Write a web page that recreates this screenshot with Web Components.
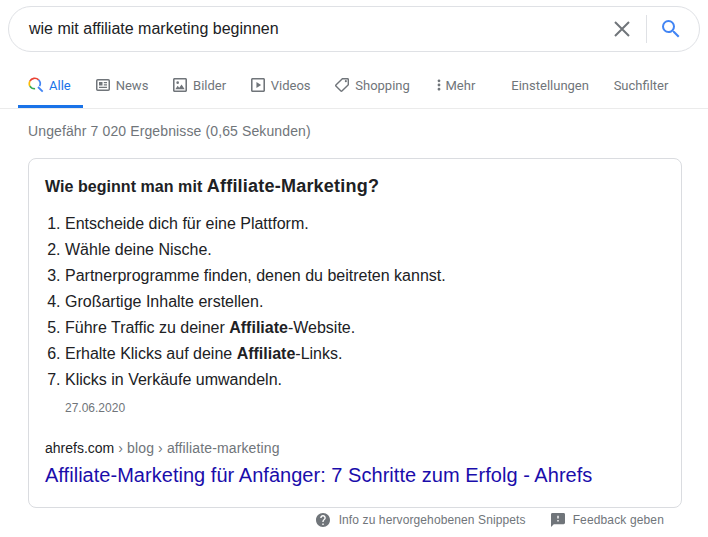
<!DOCTYPE html>
<html lang="de"><head><meta charset="utf-8"><title>Suche</title>
<style>html,body{margin:0;background:#fff;font-family:"Liberation Sans",Arial,sans-serif;overflow:hidden}body{width:708px;height:537px}</style>
</head><body>
<search-page></search-page>
<script>
const icons={
 g:'<svg width="16" height="16" viewBox="0 0 16 16" fill="none" stroke-width="1.7"><path stroke="#4285f4" stroke-width="1.8" d="M10 10l4.700 4.700"/><path stroke="#ea4335" d="M1.900 4.200A5.400 5.400 0 0 1 10.600 2.900"/><path stroke="#fbbc05" d="M1.900 4.200a5.400 5.400 0 0 0 0 4.900"/><path stroke="#34a853" d="M1.900 9.100a5.400 5.400 0 0 0 5.200 2.600"/><path stroke="#4285f4" d="M10.600 2.900a5.400 5.400 0 0 1 1 6.300"/></svg>',
 news:'<svg width="14" height="14" viewBox="0 0 14 14" fill="#70757a"><rect x=".75" y="1.750" width="12.500" height="10.500" rx="1" fill="none" stroke="#70757a" stroke-width="1.500"/><path d="M3 4h3.500v3.500H3zM7.800 4H11v1.300H7.800zM7.800 6.200H11v1.300H7.800zM3 8.700h8V10H3z"/></svg>',
 img:'<svg width="14" height="14" viewBox="3 3 18 18" fill="#70757a"><path d="M19 5v14H5V5h14m0-2H5c-1.100 0-2 .9-2 2v14c0 1.100.9 2 2 2h14c1.100 0 2-.9 2-2V5c0-1.100-.9-2-2-2z"/><circle cx="9" cy="9" r="1.700"/><path d="M14 11.500l-3 4-2-2.500-3 4.500h12z"/></svg>',
 vid:'<svg width="14" height="14" viewBox="3 3 18 18" fill="#70757a"><path d="M19 5v14H5V5h14m0-2H5c-1.100 0-2 .9-2 2v14c0 1.100.9 2 2 2h14c1.100 0 2-.9 2-2V5c0-1.100-.9-2-2-2z"/><path d="M10 8v8l6-4z"/></svg>',
 tag:'<svg width="14" height="14" viewBox="2 2 20 20" fill="#70757a" style="transform:scaleX(-1)"><path d="M21.410 11.410l-8.830-8.830c-.37-.37-.88-.58-1.410-.58H4c-1.100 0-2 .9-2 2v7.170c0 .53.21 1.040.59 1.410l8.830 8.830c.78.78 2.050.78 2.830 0l7.170-7.170c.78-.78.78-2.050-.01-2.830zM12.830 20L4 11.170V4h7.170L20 12.830 12.830 20z"/><circle cx="6.500" cy="6.500" r="1.500"/></svg>',
 dots:'<svg width="8" height="14" viewBox="8 2 8 20" fill="#70757a"><path d="M12 8c1.100 0 2-.9 2-2s-.9-2-2-2-2 .9-2 2 .9 2 2 2zm0 2c-1.100 0-2 .9-2 2s.9 2 2 2 2-.9 2-2-.9-2-2-2zm0 6c-1.100 0-2 .9-2 2s.9 2 2 2 2-.9 2-2-.9-2-2-2z"/></svg>',
 help:'<svg width="14" height="14" viewBox="2 2 20 20" fill="#70757a"><path d="M12 2C6.480 2 2 6.480 2 12s4.480 10 10 10 10-4.480 10-10S17.520 2 12 2zm1 17h-2v-2h2v2zm2.070-7.750l-.9.920C13.450 12.900 13 13.500 13 15h-2v-.5c0-1.100.45-2.100 1.170-2.830l1.240-1.260c.37-.36.59-.86.59-1.410 0-1.100-.9-2-2-2s-2 .9-2 2H8c0-2.210 1.790-4 4-4s4 1.790 4 4c0 .88-.36 1.680-.93 2.250z"/></svg>',
 fb:'<svg width="14" height="14" viewBox="2 2 20 20" fill="#70757a"><path d="M20 2H4c-1.100 0-2 .9-2 2v18l4-4h14c1.100 0 2-.9 2-2V4c0-1.100-.9-2-2-2zm-7 12h-2v-2h2v2zm0-4h-2V6h2v4z"/></svg>'
};
class SearchBox extends HTMLElement{constructor(){super();this.attachShadow({mode:'open'}).innerHTML=`<style>
:host{display:flex;align-items:center;box-sizing:border-box;margin:6px 0 0 8px;width:692px;height:46px;border:1px solid #dfe1e5;border-radius:23px;padding:0 0 0 20px;color:#202124;font-size:16px}
.q{flex:1}.x{width:18px;height:18px;display:block;margin-right:15px}.sep{width:1px;height:28px;background:#dfe1e5}.s{display:block;margin:0 16px 0 12px}
</style><span class="q"><slot></slot></span>
<svg class="x" viewBox="0 0 18 18"><path d="M2 2l14 14M16 2L2 16" stroke="#70757a" stroke-width="2" fill="none"/></svg>
<span class="sep"></span>
<svg class="s" width="24" height="24" viewBox="0 0 24 24"><path fill="#4285f4" d="M15.500 14h-.79l-.28-.27A6.470 6.470 0 0 0 16 9.500 6.500 6.500 0 1 0 9.500 16c1.610 0 3.090-.59 4.230-1.570l.27.28v.79l5 4.990L20.490 19l-4.990-5zm-6 0C7.010 14 5 11.990 5 9.500S7.010 5 9.500 5 14 7.010 14 9.500 11.990 14 9.500 14z"/></svg>`}}
customElements.define('search-box',SearchBox);
class TabItem extends HTMLElement{constructor(){super();const ic=this.getAttribute('icon');this.attachShadow({mode:'open'}).innerHTML=`<style>
:host{display:flex;align-items:center;gap:var(--g,6px);height:100%;box-sizing:border-box;color:#70757a;font:13px Roboto,Arial,sans-serif;padding-bottom:6px;border-bottom:3px solid transparent}
:host([active]){color:#1a73e8;border-bottom-color:#1a73e8;padding-left:10px;padding-right:12px;margin-right:-11.700px;--g:5px}
svg{display:block;flex:none}
</style>${ic?icons[ic]:''}<span><slot></slot></span>`}}
customElements.define('tab-item',TabItem);
class TabBar extends HTMLElement{constructor(){super();this.attachShadow({mode:'open'}).innerHTML=`<style>
:host{display:flex;align-items:stretch;box-sizing:border-box;height:38px;margin-top:19px;padding-left:18px;border-bottom:1px solid #ebebeb;gap:24.700px}
</style><slot></slot>`}}
customElements.define('tab-bar',TabBar);
class SnippetCard extends HTMLElement{constructor(){super();this.attachShadow({mode:'open'}).innerHTML=`<style>
:host{display:block;box-sizing:border-box;margin:16px 0 0 28px;width:654px;height:350px;border:1px solid #dadce0;border-radius:8px;padding:15px 16px 0;color:#202124}
h2{margin:0;font-size:16px;line-height:24px;font-weight:bold;color:#202124;letter-spacing:.05px}
h2 span{font-size:18px;letter-spacing:.22px}
ol{margin:12px 0 0;padding:0 0 0 20px;font-size:16px;line-height:26px}
.date{font-size:12px;color:#70757a;margin:5px 0 0 20px;line-height:20px}
.cite{font-size:14px;line-height:20px;color:#70757a;margin-top:20px;letter-spacing:.13px}.cite b{font-weight:normal;color:#202124;letter-spacing:0}
a{display:block;font-size:20px;line-height:26px;color:#1a0dab;margin-top:4px;text-decoration:none;letter-spacing:.03px}
</style>
<h2>Wie beginnt man mit <span>Affiliate-Marketing?</span></h2>
<ol><li>Entscheide dich für eine Plattform.</li><li>Wähle deine Nische.</li><li>Partnerprogramme finden, denen du beitreten kannst.</li><li>Großartige Inhalte erstellen.</li><li>Führe Traffic zu deiner <b>Affiliate</b>-Website.</li><li>Erhalte Klicks auf deine <b>Affiliate</b>-Links.</li><li>Klicks in Verkäufe umwandeln.</li></ol>
<div class="date">27.06.2020</div>
<div class="cite"><b>ahrefs.com</b> › blog › affiliate-marketing</div>
<a href="#">Affiliate-Marketing für Anfänger: 7 Schritte zum Erfolg - Ahrefs</a>`}}
customElements.define('snippet-card',SnippetCard);
class FootLink extends HTMLElement{constructor(){super();this.attachShadow({mode:'open'}).innerHTML=`<style>
:host{display:flex;align-items:center;gap:var(--g,9px);color:#70757a;font-size:12px;letter-spacing:var(--ls,.14px)}svg{display:block}
</style>${icons[this.getAttribute('icon')]}<span><slot></slot></span>`}}
customElements.define('foot-link',FootLink);
class SearchPage extends HTMLElement{constructor(){super();this.attachShadow({mode:'open'}).innerHTML=`<style>
:host{display:block}
.stats{margin:11px 0 0 28px;font-size:14px;line-height:22px;color:#70757a;letter-spacing:.12px}
.foot{display:flex;justify-content:flex-end;gap:25px;margin:5px 44px 0 0}
</style>
<search-box>wie mit affiliate marketing beginnen</search-box>
<tab-bar>
<tab-item active icon="g">Alle</tab-item>
<tab-item icon="news">News</tab-item>
<tab-item icon="img">Bilder</tab-item>
<tab-item icon="vid">Videos</tab-item>
<tab-item icon="tag">Shopping</tab-item>
<tab-item icon="dots" style="--g:3px">Mehr</tab-item>
<tab-item style="margin-left:11.300px">Einstellungen</tab-item>
<tab-item>Suchfilter</tab-item>
</tab-bar>
<div class="stats">Ungefähr 7 020 Ergebnisse (0,65 Sekunden)</div>
<snippet-card></snippet-card>
<div class="foot"><foot-link icon="help" style="--ls:.11px">Info zu hervorgehobenen Snippets</foot-link><foot-link icon="fb" style="--g:8px">Feedback geben</foot-link></div>`}}
customElements.define('search-page',SearchPage);
</script>
</body></html>
